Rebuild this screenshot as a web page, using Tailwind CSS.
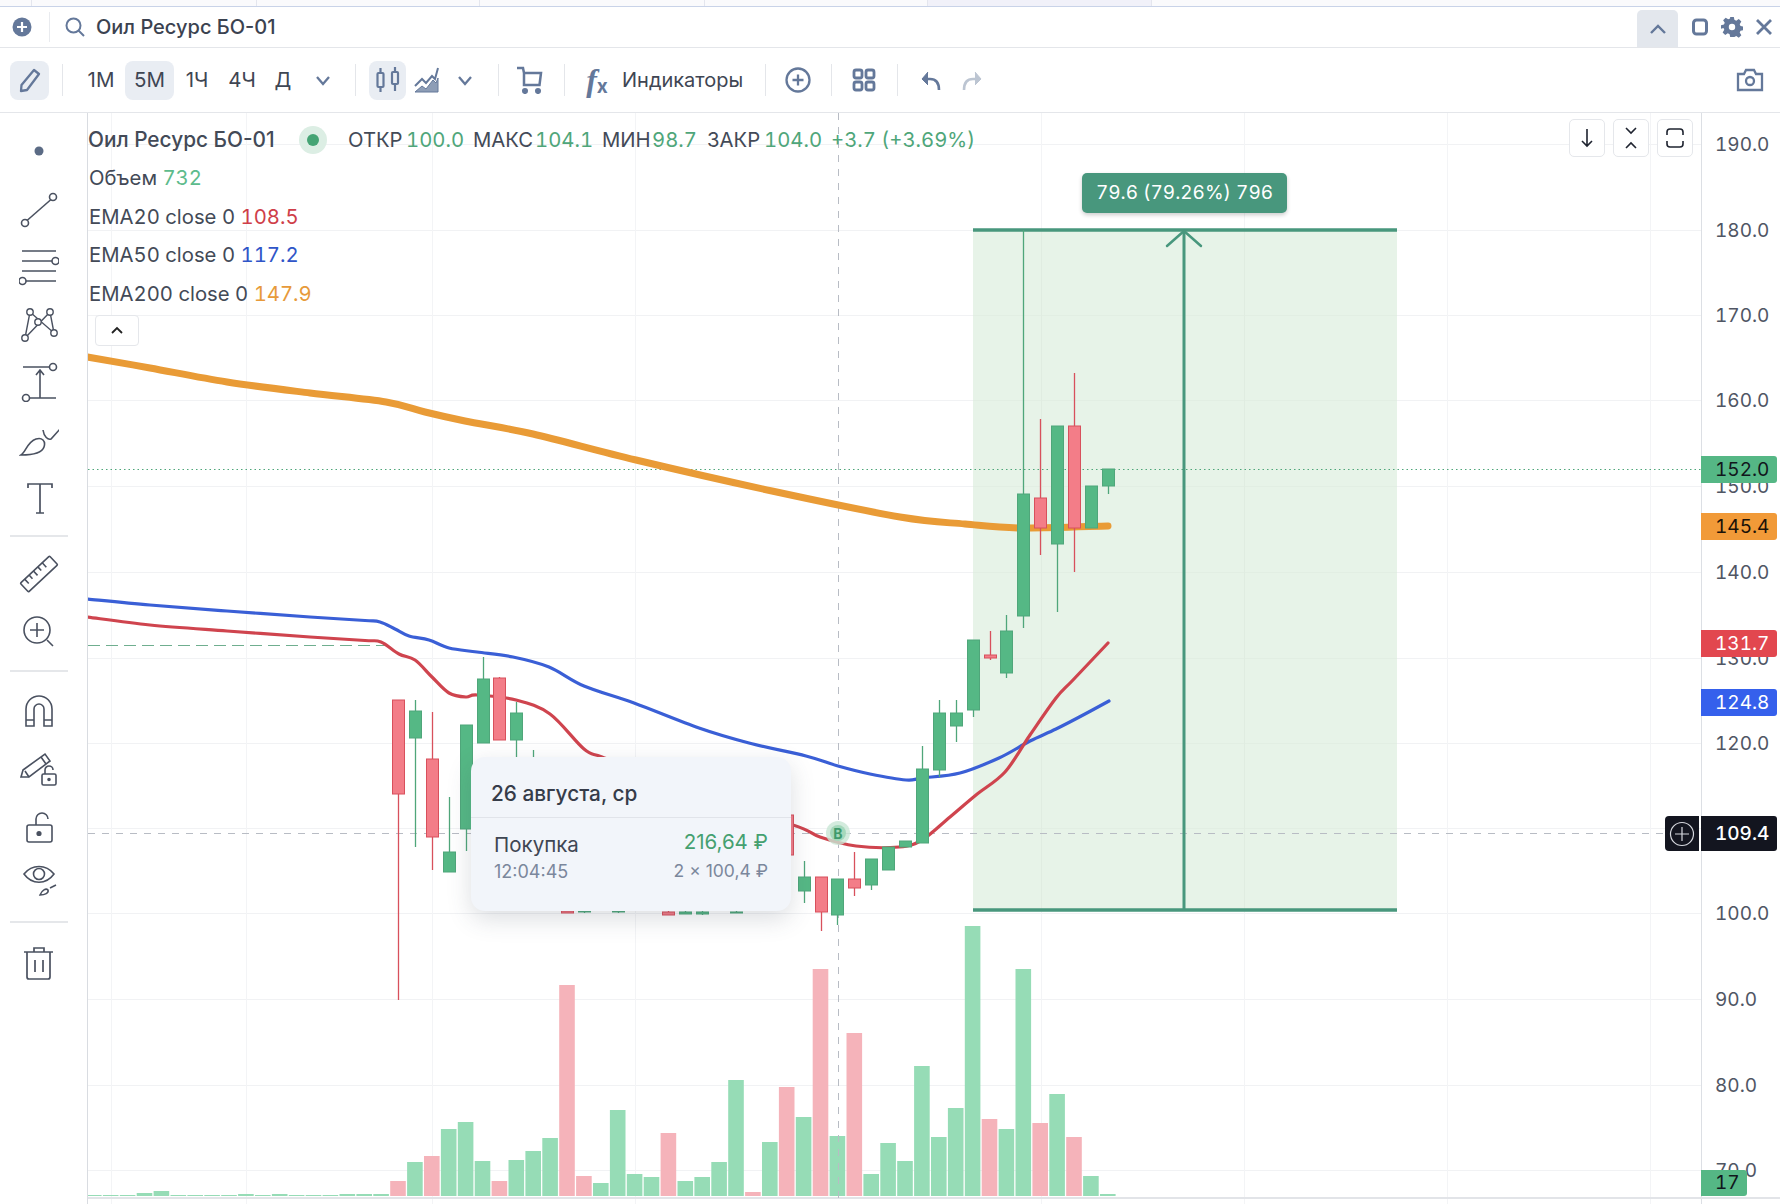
<!DOCTYPE html>
<html lang="ru"><head><meta charset="utf-8"><script src="https://cdn.jsdelivr.net/npm/@tailwindcss/browser@4"></script></head>
<body class="w-[1780px] h-[1204px] overflow-hidden bg-white font-[Inter,sans-serif] text-[#3f4653]">
<!-- tab strip -->
<div class="h-[7px] bg-[#fafafc] border-b border-[#c9d3e8] flex">
  <div class="w-[32px] border-r border-[#e4e6ee]"></div><div class="w-[225px] border-r border-[#e4e6ee]"></div><div class="w-[223px] border-r border-[#e4e6ee]"></div><div class="w-[225px] border-r border-[#e4e6ee]"></div><div class="w-[223px] border-r border-[#e4e6ee]"></div><div class="w-[224px] bg-[#f1f1f9] border-r border-[#e4e6ee]"></div>
</div>
<!-- header -->
<div class="h-[41px] border-b border-[#e4e6ea] flex items-center">
  <svg class="ml-[12px]" width="20" height="20" viewBox="0 0 20 20"><circle cx="10" cy="10" r="9.5" fill="#64789a"/><path d="M10 5v10M5 10h10" stroke="#fff" stroke-width="2.2"/></svg>
  <div class="ml-[17px] w-px h-[30px] bg-[#e9ebef]"></div>
  <svg class="ml-[14px]" width="22" height="22" viewBox="0 0 22 22" fill="none" stroke="#64789a" stroke-width="2"><circle cx="9.5" cy="9.5" r="7"/><path d="M14.5 14.5l5.5 5.5"/></svg>
  <div class="ml-[10px] text-[20px] font-medium text-[#3b4250]">Оил Ресурс БО-01</div>
  <div class="ml-auto w-[41px] h-[37px] mt-[3px] bg-[#e3e7ed] rounded-t-[5px] flex items-center justify-center"><svg width="18" height="12" viewBox="0 0 18 12" fill="none" stroke="#64789a" stroke-width="2.4"><path d="M2 10l7-7 7 7"/></svg></div>
  <svg class="ml-[13px]" width="18" height="20" viewBox="0 0 18 20" fill="none" stroke="#64789a" stroke-width="3"><rect x="2.5" y="3" width="13" height="14" rx="3"/></svg>
  <svg class="ml-[12px]" width="22" height="22" viewBox="0 0 24 24" fill="#64789a"><path fill-rule="evenodd" d="M10 1h4l.6 3.2 2 .9 2.8-1.8 2.8 2.8-1.8 2.8.9 2 3.2.6v4l-3.2.6-.9 2 1.8 2.800-2.800 2.800-2.800-1.800-2 .9L14 23h-4l-.6-3.200-2-.9-2.800 1.800-2.800-2.800 1.800-2.800-.9-2L0 14v-4l3.200-.6.9-2-1.800-2.800 2.800-2.800 2.800 1.800 2-.9zM12 8.500a3.500 3.500 0 100 7 3.500 3.500 0 000-7z"/></svg>
  <svg class="ml-[12px] mr-[7px]" width="18" height="18" viewBox="0 0 18 18" fill="none" stroke="#64789a" stroke-width="2.800"><path d="M2 2l14 14M16 2L2 16"/></svg>
</div>
<!-- toolbar -->
<div class="h-[65px] border-b border-[#e4e6ea] flex items-center text-[20.500px] text-[#3f4653]">
  <div class="ml-[10px] w-[39px] h-[39px] rounded-[8px] bg-[#e9edf3] flex items-center justify-center"><svg width="24" height="26" viewBox="0 0 24 26" fill="none" stroke="#64789a" stroke-width="2.300" stroke-linejoin="round"><path d="M16 3l5 4L9 23l-6 1 .5-6z"/></svg></div>
  <div class="ml-[13px] w-px h-[32px] bg-[#e4e6ea]"></div>
  <div class="ml-[17px] w-[42px] h-[39px] flex items-center justify-center">1М</div>
  <div class="ml-[3px] w-[49px] h-[39px] rounded-[8px] bg-[#e9edf3] flex items-center justify-center">5М</div>
  <div class="ml-[2px] w-[42px] h-[39px] flex items-center justify-center">1Ч</div>
  <div class="ml-[3px] w-[42px] h-[39px] flex items-center justify-center">4Ч</div>
  <div class="w-[40px] h-[39px] flex items-center justify-center">Д</div>
  <div class="w-[40px] flex justify-center"><svg width="16" height="11" viewBox="0 0 16 11" fill="none" stroke="#64789a" stroke-width="2.300"><path d="M2 2l6 7 6-7"/></svg></div>
  <div class="ml-[12px] w-px h-[32px] bg-[#e4e6ea]"></div>
  <div class="ml-[13px] w-[37px] h-[39px] rounded-[8px] bg-[#e9edf3] flex items-center justify-center"><svg width="26" height="30" viewBox="0 0 26 30" fill="none" stroke="#64789a" stroke-width="2.200"><rect x="2.500" y="8" width="6" height="14" rx="1"/><path d="M5.500 3v5M5.500 22v5"/><rect x="17" y="7" width="6" height="12" rx="1"/><path d="M20 2v5M20 19v7"/></svg></div>
  <div class="ml-[4px] w-[34px] flex justify-center"><svg width="26" height="28" viewBox="0 0 26 28" fill="none" stroke="#64789a" stroke-width="2"><path d="M1 20l7-7 4 4 6-7 3 3 3-11"/><path d="M1 26l7-6 4 3 7-9 3 3 2-5v14H1z" fill="#8d9db6" stroke-width="1"/></svg></div>
  <div class="ml-[4px] w-[34px] flex justify-center"><svg width="16" height="11" viewBox="0 0 16 11" fill="none" stroke="#64789a" stroke-width="2.300"><path d="M2 2l6 7 6-7"/></svg></div>
  <div class="ml-[16px] w-px h-[32px] bg-[#e4e6ea]"></div>
  <div class="ml-[11px] w-[40px] flex justify-center"><svg width="28" height="28" viewBox="0 0 28 28" fill="none" stroke="#64789a" stroke-width="2.500"><path d="M1 2h6l1 5h17l-1.500 12H8V7"/><circle cx="9" cy="25" r="1.800" fill="#64789a"/><circle cx="22" cy="25" r="1.800" fill="#64789a"/></svg></div>
  <div class="ml-[14px] w-px h-[32px] bg-[#e4e6ea]"></div>
  <div class="ml-[17px] w-[30px] flex justify-center items-end font-['Liberation_Serif',serif] italic font-bold text-[#64789a] leading-none"><span class="text-[32px]">f</span><span class="text-[19px] not-italic font-[Inter,sans-serif]">x</span></div>
  <div class="ml-[10px] w-[120px] whitespace-nowrap text-[20px]">Индикаторы</div>
  <div class="ml-[23px] w-px h-[32px] bg-[#e4e6ea]"></div>
  <div class="ml-[12px] w-[40px] flex justify-center"><svg width="26" height="26" viewBox="0 0 26 26" fill="none" stroke="#64789a" stroke-width="2.300"><circle cx="13" cy="13" r="11.500"/><path d="M13 7.500v11M7.500 13h11"/></svg></div>
  <div class="ml-[13px] w-px h-[32px] bg-[#e4e6ea]"></div>
  <div class="ml-[12px] w-[40px] flex justify-center"><svg width="24" height="24" viewBox="0 0 24 24" fill="none" stroke="#64789a" stroke-width="2.800"><rect x="2" y="2" width="8" height="8" rx="2"/><rect x="14" y="2" width="8" height="8" rx="2"/><rect x="2" y="14" width="8" height="8" rx="2"/><rect x="14" y="14" width="8" height="8" rx="2"/></svg></div>
  <div class="ml-[13px] w-px h-[32px] bg-[#e4e6ea]"></div>
  <div class="ml-[12px] w-[40px] flex justify-center"><svg width="22" height="22" viewBox="0 0 22 22" fill="none" stroke="#64789a" stroke-width="2.600"><path d="M20 21c0-7-3-11-9-11H4"/><path d="M9 3L3 10l6 6" fill="#64789a" stroke-width="1"/></svg></div>
  <div class="ml-[3px] w-[40px] flex justify-center"><svg width="22" height="22" viewBox="0 0 22 22" fill="none" stroke="#bcc5d2" stroke-width="2.600"><path d="M2 21c0-7 3-11 9-11h7"/><path d="M13 3l6 7-6 6" fill="#bcc5d2" stroke-width="1"/></svg></div>
  <div class="ml-auto mr-[10px] w-[40px] flex justify-center"><svg width="28" height="26" viewBox="0 0 28 26" fill="none" stroke="#64789a" stroke-width="2.300"><path d="M2 7h6l2-4h8l2 4h6v16H2z"/><circle cx="14" cy="14" r="4"/></svg></div>
</div>
<!-- main -->
<div class="flex h-[1091px]">
  <aside class="w-[88px] shrink-0 border-r border-[#d9dce1] pl-[19px] flex flex-col text-[#4a5160]">
    <svg class="mt-[18px] shrink-0" width="40" height="40" viewBox="-20 -20 40 40"><circle r="4.500" fill="#5b6b85"/></svg>
    <svg class="mt-[19px] shrink-0" width="40" height="40" viewBox="-20 -20 40 40" fill="none" stroke="#4a5160" stroke-width="1.600"><circle cx="14" cy="-13" r="3.500"/><circle cx="-14" cy="13" r="3.500"/><path d="M12 -10.500L-12 10.500"/></svg>
    <svg class="mt-[17px] shrink-0" width="40" height="40" viewBox="-20 -20 40 40" fill="none" stroke="#4a5160" stroke-width="1.600"><path d="M-17 -16H17M-17 -6H13M-17 4H17M-13 14H17"/><circle cx="16.500" cy="-6" r="3.500"/><circle cx="-16.500" cy="14" r="3.500"/></svg>
    <svg class="mt-[16px] shrink-0" width="40" height="40" viewBox="-20 -20 40 40" fill="none" stroke="#4a5160" stroke-width="1.400"><path d="M-14 15L-9 -11L15 10L11 -11L-14 15"/><circle cx="-14" cy="15" r="3.200" fill="#fff"/><circle cx="-9" cy="-11" r="3.200" fill="#fff"/><circle cx="15" cy="10" r="3.200" fill="#fff"/><circle cx="11" cy="-11" r="3.200" fill="#fff"/><circle cx="-1" cy="-1" r="3.200" fill="#fff"/></svg>
    <svg class="mt-[19px] shrink-0" width="40" height="40" viewBox="-20 -20 40 40" fill="none" stroke="#4a5160" stroke-width="1.600"><path d="M-16 -15H10M-9 16H17M1 16V-11M-3 -7L1 -12L5 -7"/><circle cx="14" cy="-15" r="3.500"/><circle cx="-13" cy="16" r="3.500"/></svg>
    <svg class="mt-[18px] shrink-0" width="40" height="40" viewBox="-20 -20 40 40" fill="none" stroke="#4a5160" stroke-width="1.600"><path d="M-18 15C-13 12-12 2-3-1C3-3 7 1 5 7C3 13-8 15-18 15Z"/><path d="M4-10C5-3 9 0 12-1L21-11"/></svg>
    <svg class="mt-[17px] shrink-0" width="40" height="40" viewBox="-20 -20 40 40" fill="none" stroke="#4a5160" stroke-width="1.700"><path d="M-11 -9V-13H13V-9M1 -13V16M-3 16H5"/></svg>
    <div class="mt-[18px] w-[58px] -ml-[9px] h-[2px] bg-[#e5e7ea] shrink-0"></div>
    <svg class="mt-[17px] shrink-0" width="40" height="40" viewBox="-20 -20 40 40" fill="none" stroke="#4a5160" stroke-width="1.600"><g transform="rotate(-43)"><rect x="-20" y="-6" width="40" height="12" rx="1"/><path d="M-14 -6V0M-8 -6V-1M-2 -6V0M4 -6V-1M10 -6V0"/></g></svg>
    <svg class="mt-[17px] shrink-0" width="40" height="40" viewBox="-20 -20 40 40" fill="none" stroke="#4a5160" stroke-width="1.600"><circle cx="-2" cy="-1" r="13"/><path d="M-2 -8V6M-9 -1H5M8 9L14 15"/></svg>
    <div class="mt-[19px] w-[58px] -ml-[9px] h-[2px] bg-[#e5e7ea] shrink-0"></div>
    <svg class="mt-[19px] shrink-0" width="40" height="40" viewBox="-20 -20 40 40" fill="none" stroke="#4a5160" stroke-width="1.600"><path d="M-13 15V-2A13 13 0 0 1 13 -2V15H5V-2A5 5 0 0 0 -5 -2V15Z"/><path d="M-13 9H-5M5 9H13"/></svg>
    <svg class="mt-[16px] shrink-0" width="40" height="40" viewBox="-20 -20 40 40" fill="none" stroke="#4a5160" stroke-width="1.600"><path d="M-16 3L6 -13L11 -6L-10 10L-18 10Z"/><path d="M2 -10L7 -3M-14 4L-10 10"/><rect x="3" y="7" width="14" height="11" rx="1.500"/><path d="M6 7V3A4 4 0 0 1 14 3"/><circle cx="10" cy="12.500" r="1" fill="#4a5160"/></svg>
    <svg class="mt-[21px] shrink-0" width="40" height="40" viewBox="-20 -20 40 40" fill="none" stroke="#4a5160" stroke-width="1.600"><rect x="-12" y="-3" width="25" height="17" rx="2"/><path d="M-3 -3V-9A6 6 0 0 1 9 -9"/><circle cy="5.500" r="1.800" fill="#4a5160"/></svg>
    <svg class="mt-[11px] shrink-0" width="40" height="40" viewBox="-20 -20 40 40" fill="none" stroke="#4a5160" stroke-width="1.600"><path d="M-15 -5C-7 -15 7 -15 15 -5C7 6 -7 6 -15 -5Z"/><circle cy="-5" r="5.500"/><path d="M1 16C3 11 7 9 9 11C10 14 6 16 1 16ZM11 9L17 6"/></svg>
    <div class="mt-[22px] w-[58px] -ml-[9px] h-[2px] bg-[#e5e7ea] shrink-0"></div>
    <svg class="mt-[20px] shrink-0" width="40" height="40" viewBox="-20 -20 40 40" fill="none" stroke="#4a5160" stroke-width="1.700"><path d="M-15 -11H14M-5 -11V-15H5V-11M-12 -11V14A2 2 0 0 0 -10 16H9A2 2 0 0 0 11 14V-11M-4 -3V9M4 -3V9"/></svg>
  </aside>
  <!-- chart -->
  <div class="relative w-[1613px] h-full">
    <svg id="chart" class="absolute inset-0 w-full h-full" viewBox="88 113 1613 1091" fill="none"></svg>
    <!-- legend -->
    <div class="absolute left-0 top-[8px] text-[20.300px] leading-[38.500px] text-[#434a57] whitespace-nowrap tabular-nums">
      <div class="flex items-center h-[38px]"><span class="font-medium w-[219px] text-[20.800px] [font-variant-numeric:normal]">Оил Ресурс БО-01</span><span class="w-[28px] h-[28px] rounded-full bg-[#dceee4] flex items-center justify-center -ml-[8px]"><span class="w-[12px] h-[12px] rounded-full bg-[#45a474]"></span></span><span class="ml-[21px] w-[58px]">ОТКР</span><span class="text-[#4fa67a] w-[67px]">100.0</span><span class="w-[62px]">МАКС</span><span class="text-[#4fa67a] w-[67px]">104.1</span><span class="w-[50px]">МИН</span><span class="text-[#4fa67a] w-[55px]">98.7</span><span class="w-[57px]">ЗАКР</span><span class="text-[#4fa67a] w-[67px]">104.0</span><span class="text-[#4fa67a]">+3.7 (+3.69%)</span></div>
      <div class="pl-[1px]">Объем <span class="text-[#5dbb8c]">732</span></div>
      <div class="pl-[1px]">EMA20 close 0 <span class="text-[#cf3e49]">108.5</span></div>
      <div class="pl-[1px]">EMA50 close 0 <span class="text-[#2f55c8]">117.2</span></div>
      <div class="pl-[1px]">EMA200 close 0 <span class="text-[#e79a3a]">147.9</span></div>
      <div class="ml-[7px] mt-[2px] w-[44px] h-[31px] bg-white border border-[#e5e7eb] rounded-[4px] flex items-center justify-center"><svg width="14" height="9" viewBox="0 0 14 9" fill="none" stroke="#222" stroke-width="1.800"><path d="M2 7l5-5 5 5"/></svg></div>
    </div>
    <!-- chart buttons -->
    <div class="absolute right-[8px] top-[6px] flex gap-[8px]">
      <div class="w-[36px] h-[38px] bg-white border border-[#e5e7eb] rounded-[5px] flex items-center justify-center"><svg width="14" height="20" viewBox="0 0 14 20" fill="none" stroke="#1f2430" stroke-width="1.600"><path d="M7 1v17M2 13l5 5 5-5"/></svg></div>
      <div class="w-[36px] h-[38px] bg-white border border-[#e5e7eb] rounded-[5px] flex items-center justify-center"><svg width="14" height="24" viewBox="0 0 14 24" fill="none" stroke="#1f2430" stroke-width="1.600"><path d="M2 2l5 5 5-5M2 22l5-5 5 5"/></svg></div>
      <div class="w-[36px] h-[38px] bg-white border border-[#e5e7eb] rounded-[5px] flex items-center justify-center"><svg width="20" height="20" viewBox="0 0 20 20" fill="none" stroke="#1f2430" stroke-width="1.600"><path d="M2 7V4a3 3 0 013-3h10a3 3 0 013 3v3M2 13v3a3 3 0 003 3h10a3 3 0 003-3v-3"/></svg></div>
    </div>
    <!-- measure label -->
    <div class="absolute left-[994px] top-[60px] w-[205px] h-[40px] bg-[#48977d] rounded-[5px] shadow-[0_2px_4px_rgba(0,0,0,0.2)] text-white text-[19px] tabular-nums flex items-center justify-center whitespace-nowrap">79.6 (79.26%) 796</div>
    <!-- trade tooltip -->
    <div class="absolute left-[383px] top-[644px] w-[320px] h-[154px] bg-[#f2f5fa] rounded-[14px] shadow-[0_8px_24px_rgba(60,70,90,0.18)]">
      <div class="h-[61px] border-b border-[#e1e4ea] pl-[20px] flex items-center pt-[13px] text-[20.800px] font-medium text-[#363c49]">26 августа, ср</div>
      <div class="flex justify-between pl-[23px] pr-[23px] pt-[10px]">
        <div><div class="text-[20.500px] leading-[32px] text-[#3f4653] mt-[1px]">Покупка</div><div class="text-[18px] leading-[22px] text-[#7b879c]">12:04:45</div></div>
        <div class="text-right"><div class="text-[20.500px] leading-[28px] text-[#45a070]">216,64 ₽</div><div class="text-[17.500px] leading-[30px] text-[#7b879c]">2 × 100,4 ₽</div></div>
      </div>
    </div>
    <!-- crosshair add button -->
    <div class="absolute left-[1577px] top-[703px] w-[34px] h-[35px] bg-[#13151f] rounded-l-[4px] flex items-center justify-center"><svg width="26" height="26" viewBox="0 0 26 26" fill="none" stroke="#d6d8de" stroke-width="1.200"><circle cx="13" cy="13" r="11.500"/><path d="M13 6v14M6 13h14"/></svg></div>
  </div>
  <!-- price axis -->
  <div class="relative w-[79px] h-full border-l border-[#dcdfe4] text-[19px] tabular-nums leading-[26px] text-[#505664]">
    <div class="absolute left-[13px] top-[19px]">190.0</div>
    <div class="absolute left-[13px] top-[105px]">180.0</div>
    <div class="absolute left-[13px] top-[190px]">170.0</div>
    <div class="absolute left-[13px] top-[275px]">160.0</div>
    <div class="absolute left-[13px] top-[361px]">150.0</div>
    <div class="absolute left-[13px] top-[447px]">140.0</div>
    <div class="absolute left-[13px] top-[533px]">130.0</div>
    <div class="absolute left-[13px] top-[618px]">120.0</div>
    <div class="absolute left-[13px] top-[788px]">100.0</div>
    <div class="absolute left-[13px] top-[874px]">90.0</div>
    <div class="absolute left-[13px] top-[960px]">80.0</div>
    <div class="absolute left-[13px] top-[1045px]">70.0</div>
    <div class="absolute -left-px top-[343px] w-[76px] h-[27px] bg-[#55b785] rounded-r-[3px] pl-[14px] text-[#11161c] leading-[27px]">152.0</div>
    <div class="absolute -left-px top-[400px] w-[76px] h-[27px] bg-[#f19a38] rounded-r-[3px] pl-[14px] text-[#1b1208] leading-[27px]">145.4</div>
    <div class="absolute -left-px top-[517px] w-[76px] h-[27px] bg-[#e2474f] rounded-r-[3px] pl-[14px] text-white leading-[27px]">131.7</div>
    <div class="absolute -left-px top-[576px] w-[76px] h-[27px] bg-[#3560ec] rounded-r-[3px] pl-[14px] text-white leading-[27px]">124.8</div>
    <div class="absolute -left-px top-[703px] w-[76px] h-[35px] bg-[#13151f] rounded-r-[3px] pl-[14px] text-white font-medium leading-[35px]">109.4</div>
    <div class="absolute -left-px top-[1057px] w-[46px] h-[26px] bg-[#55b785] rounded-r-[3px] pl-[14px] text-[#11161c] leading-[26px]">17</div>
    <div class="absolute -left-px top-[1084px] w-[79px] h-[2px] bg-[#e2e4e8]"></div>
  </div>
</div>
<script>
var s='';
function line(x1,y1,x2,y2,c,w,d){s+='<line x1="'+x1+'" y1="'+y1+'" x2="'+x2+'" y2="'+y2+'" stroke="'+c+'" stroke-width="'+(w||1)+'"'+(d?' stroke-dasharray="'+d+'"':'')+'/>';}
function rect(x,y,w,h,f,st){s+='<rect x="'+x+'" y="'+y+'" width="'+w+'" height="'+h+'" fill="'+f+'"'+(st?' stroke="'+st+'"':'')+'/>';}
function poly(p,c,w){s+='<polyline points="'+p+'" fill="none" stroke="'+c+'" stroke-width="'+w+'" stroke-linejoin="round" stroke-linecap="round"/>';}
function curve(str,c,w){var p=str.split(' ').map(function(q){return q.split(',').map(Number);});var d='M'+p[0][0]+' '+p[0][1];for(var i=0;i<p.length-1;i++){var a=p[Math.max(i-1,0)],b=p[i],e=p[i+1],f=p[Math.min(i+2,p.length-1)];d+='C'+(b[0]+(e[0]-a[0])/6).toFixed(1)+' '+(b[1]+(e[1]-a[1])/6).toFixed(1)+' '+(e[0]-(f[0]-b[0])/6).toFixed(1)+' '+(e[1]-(f[1]-b[1])/6).toFixed(1)+' '+e[0]+' '+e[1];}s+='<path d="'+d+'" fill="none" stroke="'+c+'" stroke-width="'+w+'" stroke-linejoin="round" stroke-linecap="round"/>';}
[144,230,315,400,486,572,658,743,828,913,999,1085,1170].forEach(function(y){line(88,y+.5,1701,y+.5,'#f1f2f4');});
[111,246,432,635,1041,1244,1447,1650].forEach(function(x){line(x+.5,113,x+.5,1204,'#f3f4f6');});
rect(973,230,424,680,'#e7f3e8');
[315,400,486,572,658,743,828].forEach(function(y){line(973,y+.5,1397,y+.5,'#e2eee3');});
line(1041.5,230,1041.5,910,'#e0ece1');line(1244.5,230,1244.5,910,'#e0ece1');
// volume
var V=[[-18,825,1],[-17,825,1],[-16,825,1],[-15,819,1],[-14,813,1],[-13,825,1],[-12,825,1],[-11,825,1],[-10,825,1],[-9,822,1],[-8,825,1],[-7,822,1],[-6,825,1],[-5,825,1],[-4,825,1],[-3,822,1],[-2,822,1],[-1,822,1]];
[[783,0],[726,1],[708,0],[627,1],[606,1],[723,1],[783,0],[720,1],[693,1],[654,1],[195,0],[768,0],[789,1],[570,1],[762,1],[771,1],[639,0],[783,1],[771,1],[726,1],[480,1],[816,0],[666,1],[501,0],[591,1],[147,0],[648,1],[339,0],[762,1],[669,1],[723,1],[438,1],[651,1],[564,1],[18,1],[597,0],[627,1],[147,1],[609,0],[522,1],[651,0],[768,1],[822,1]].forEach(function(b,i){V.push([i,b[0],b[1]]);});
V.forEach(function(b){var x=398+16.9*b[0],t=920+b[1]/3;rect(x-7.8,t,15.6,1196-t,b[2]?'#96dcb6':'#f5b3ba');});
rect(88,1197,1613,2,'#e2e4e8');
// crosshair & lines
line(838.5,113,838.5,1204,'#b8bcc4',1,'7 7');
line(88,833.500,1665,833.500,'#b8bcc4',1,'7 7');
line(88,469.500,1701,469.500,'#4fa67a',1,'1.500 3');
line(88,645.500,385,645.500,'#6fae8f',1,'12 6');
// measure
line(973,230,1397,230,'#48977d',3.500);line(973,910,1397,910,'#48977d',3.500);line(1184,230,1184,910,'#48977d',3);
poly('1167,246 1184,231 1201,246','#48977d',2.500);
// emas
curve('87,357 150,368 227,382 310,393 386,402 425,412 465,421 533,434 636,460 772,491 900,517 965,524 1022,528 1108,526','#e99b36',7);
curve('87,599 150,605 227,611 310,617 365,620.500 380,622 395,629 409,636 429,640 449,648 477,652 513,657 549,667 584,686 634,703 699,728 749,743 806,756 838,766 870,774 906,780 922,778 960,773 999,758 1030,741 1056,729 1085,714 1109,701','#3a5fd6',3.200);
curve('87,617 150,625 227,631 310,637 365,640.500 381,642 399,654 415,660 432,677 449,693 466,697 477,695 516,700 550,714 584,749 602,757 650,775 700,800 793,825 820,837 856,846 899,847 922,840 950,817 976,795 1005,772 1030,735 1056,698 1073,680 1108,643','#cf444e',3.200);
// candles [i,up,wickTop,wickBot,bodyTop,bodyBot]
var G='#55b885',GS='#4fa67a',R='#f37d88',RS='#d8505c';
[[0,0,700,1000,700,794],[1,1,700,847,711,738],[2,0,712,870,759,837],[3,1,797,872,852,872],[4,1,725,851,725,829],[5,1,657,743,679,743],[6,0,677,740,678,740],[7,1,702,760,713,740],[8,1,750,790,770,780],[10,0,905,913,911,913],[11,1,905,913,911,911],[13,1,905,913,911,911],[16,0,908,915,912,915],[17,1,908,914,912,914],[18,1,908,915,912,914],[20,1,908,913,912,912],[23,0,815,855,815,855],[24,1,861,903,877,891],[25,0,877,931,877,912],[26,1,879,925,879,915],[27,0,852,896,879,888],[28,1,859,890,859,885],[29,1,847,870,847,870],[30,1,841,847,841,847],[31,1,746,843,769,843],[32,1,700,777,713,770],[33,1,700,742,713,726],[34,1,640,717,640,710],[35,0,631,660,655,658],[36,1,615,678,631,673],[37,1,230,628,494,616],[38,0,419,555,498,528],[39,1,426,612,426,544],[40,0,373,572,426,528],[41,1,486,528,486,528],[42,1,469,494,469,486]].forEach(function(c){var x=398+16.9*c[0];x=Math.round(x);line(x+.5,c[2],x+.5,c[3],c[1]?GS:RS,1.300);rect(x-5.500,c[4],12,Math.max(c[5]-c[4],1),c[1]?G:R,c[1]?GS:RS);});
// trade marker
s+='<circle cx="838" cy="833" r="12" fill="#c8e6d4" fill-opacity=".8"/><circle cx="838" cy="833" r="8" fill="#a5d8bb"/><text x="838" y="838.500" text-anchor="middle" font-size="14" font-weight="700" fill="#3f9a6c" font-family="Inter,sans-serif">B</text>';
document.getElementById('chart').innerHTML=s;
</script>
</body></html>
